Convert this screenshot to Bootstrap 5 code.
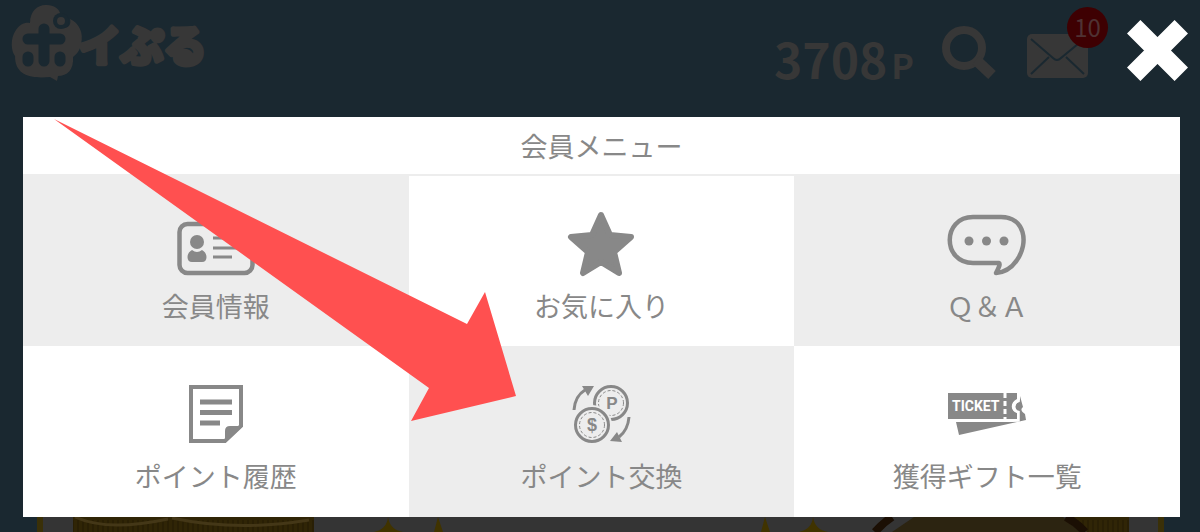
<!DOCTYPE html>
<html lang="ja">
<head>
<meta charset="utf-8">
<meta name="viewport" content="width=device-width, initial-scale=1">
<title>会員メニュー</title>
<link href="https://cdn.jsdelivr.net/npm/bootstrap@5.3.0/dist/css/bootstrap.min.css" rel="stylesheet">
<style>
:root { --night: #1a2830; --dim: #373737; --ink: #888; --tile: #ededed; }
body { background: var(--night); font-family: "Noto Sans CJK JP", sans-serif; color: var(--ink); overflow-x: hidden; }
.site-bar { height: 117px; padding: 4px 12px 0 10px; color: var(--dim); }
.site-bar svg { display: block; }
.brand text { font-weight: 700; stroke-linejoin: round; }
.header-tools { padding-top: 16px; }
.points { font-size: 48px; line-height: 48px; font-weight: 700; margin: 14px 28px 0 0; }
.points small { font-size: 34px; margin-left: 4px; }
.bar-button { background: none; border: 0; padding: 0; color: inherit; }
.search-button { margin: 5px 30px 0 0; }
.mail-button { margin: 14px 39px 0 0; }
.mail-count { top: -27px; right: -20px; width: 41px; height: 41px; background: #3e0002; color: #4f3233; font-size: 24px; line-height: 40px; }
.member-menu { margin: 0 20px 0 23px; background: #fff; z-index: 1; }
.menu-title { font-size: 27px; line-height: 57px; height: 59px; font-weight: 400; border-bottom: 2px solid var(--tile); }
.menu-tile { height: 171px; padding-top: 30px; color: var(--ink); font-size: 27px; line-height: 40px; text-decoration: none; }
.menu-tile svg { height: 80px; width: 100px; }
.first-row .menu-tile { height: 170px; }
.shaded { background: var(--tile); }
.pointer-arrow { left: 31px; top: 2px; pointer-events: none; }
.promo { margin: 0 36px 0 37px; height: 15px; background: #343434; }
.promo svg { display: block; }
</style>
</head>
<body>
<header class="site-bar d-flex justify-content-between align-items-start">
  <a class="brand" href="#" aria-label="ポイぷる">
    <svg width="202" height="80" viewBox="0 0 202 80" fill="#373737">
      <path d="M20 19C20 6 29 0 37 1C44 1 49 5 50 9C45 16 47 25 55 24C60 23 61 19 60 15C69 19 74 29 71 40C70 46 67 50 63 53C64 66 57 72 48 72L47 77L40 73C18 75 5 70 5 52C1 47 0 34 6 26C10 20 15 18 20 19Z"/>
      <circle cx="51" cy="17" r="8" fill="#1a2830"/><circle cx="51" cy="17" r="4"/>
      <path d="M18 35H50M34 25V57M18 53V57M50 53V57" fill="none" stroke="#1a2830" stroke-width="11" stroke-linecap="round"/>
      <text x="68" y="58" font-size="43" stroke="#373737" stroke-width="5">イぷる</text>
    </svg>
  </a>
  <div class="header-tools d-flex align-items-start">
    <div class="points">3708<small>P</small></div>
    <button class="bar-button search-button" type="button" aria-label="検索">
      <svg width="55" height="54" viewBox="0 0 55 54" fill="none" stroke="currentColor"><circle cx="22" cy="23" r="18" stroke-width="8"/><path d="M34 35L50 50" stroke-width="11"/></svg>
    </button>
    <button class="bar-button mail-button position-relative" type="button" aria-label="メール">
      <svg width="61" height="44" viewBox="0 0 61 44"><rect width="61" height="44" rx="5" fill="currentColor"/><path d="M4 5L26 24Q30 28 34 24L57 5M4 40L22 23M57 40L39 23" fill="none" stroke="#1a2830" stroke-width="2"/></svg>
      <span class="mail-count position-absolute rounded-circle">10</span>
    </button>
    <button class="bar-button text-white" type="button" aria-label="閉じる">
      <svg width="61" height="61" viewBox="0 0 61 61" stroke="currentColor" stroke-width="19"><path d="M6.7 6.7L54.3 54.3M54.3 6.7L6.7 54.3"/></svg>
    </button>
  </div>
</header>

<main class="member-menu position-relative">
  <h1 class="menu-title text-center m-0">会員メニュー</h1>
  <nav aria-label="会員メニュー">
    <div class="row g-0 first-row text-center">
      <a class="col-4 menu-tile shaded d-flex flex-column align-items-center" href="#">
        <svg viewBox="0 0 100 80"><rect x="13.5" y="18" width="73" height="49" rx="8" fill="none" stroke="#888" stroke-width="4.5"/><circle cx="31" cy="36" r="7" fill="#888"/><path d="M26 44C20 47 20 56 26 56H36C42 56 42 47 36 44Q31 48 26 44Z" fill="#888"/><path d="M47 32H76M47 42H76M47 51H66" stroke="#888" stroke-width="3"/></svg>
        <span>会員情報</span>
      </a>
      <a class="col-4 menu-tile d-flex flex-column align-items-center" href="#">
        <svg viewBox="0 0 100 80"><path d="M50 9L59 29L80 31L63 46L68 67L50 56L32 67L37 46L20 31L41 29Z" fill="#888" stroke="#888" stroke-width="6" stroke-linejoin="round"/></svg>
        <span>お気に入り</span>
      </a>
      <a class="col-4 menu-tile shaded d-flex flex-column align-items-center" href="#">
        <svg viewBox="0 0 100 80"><path d="M36 11H64C88 11 92 37 80 54Q72 66 59 67Q64 58 62 57H36C5 57 5 11 36 11Z" fill="none" stroke="#888" stroke-width="4.5" stroke-linejoin="round"/><g fill="#888"><circle cx="32" cy="35" r="4.5"/><circle cx="49.5" cy="35" r="4.5"/><circle cx="67" cy="35" r="4.5"/></g></svg>
        <span>Ｑ＆Ａ</span>
      </a>
    </div>
    <div class="row g-0 text-center">
      <a class="col-4 menu-tile d-flex flex-column align-items-center" href="#">
        <svg viewBox="0 0 100 80"><path d="M25 11H75V50L59 65H25Z" fill="none" stroke="#888" stroke-width="4"/><path d="M34 26H66M34 36.5H66M34 47H54" stroke="#888" stroke-width="5"/><path d="M59 67V55Q59 50 64 50H77Z" fill="#888"/></svg>
        <span>ポイント履歴</span>
      </a>
      <a class="col-4 menu-tile shaded d-flex flex-column align-items-center" href="#">
        <svg viewBox="0 0 100 80" fill="none" stroke="#888"><circle cx="60" cy="27" r="16.5" stroke-width="3"/><circle cx="60" cy="27" r="12.5" stroke-dasharray="3 2"/><circle cx="41" cy="49" r="20" fill="#ededed" stroke="none"/><circle cx="41" cy="49" r="16.5" stroke-width="3"/><circle cx="41" cy="49" r="12.5" stroke-dasharray="3 2"/><path d="M23 34Q24 20 34 14M78 41Q77 54 68 61" stroke-width="3"/><path d="M31 10L43 10L37 20ZM71 66L59 65L66 56Z" fill="#888" stroke="none"/><g fill="#888" stroke="none" font-family="Liberation Sans, sans-serif" font-weight="700" text-anchor="middle"><text x="61" y="33" font-size="17">P</text><text x="41" y="55" font-size="18">$</text></g></svg>
        <span>ポイント交換</span>
      </a>
      <a class="col-4 menu-tile d-flex flex-column align-items-center" href="#">
        <svg viewBox="0 0 100 80"><path d="M19 46L76 46L86 43L88 38L89 44L22 59ZM83 20L86 31Q82 34 88 38L89 44L77 46H81V36Q75 30 83 24Z" fill="#888"/><path d="M11 17H80V23C73 26 73 35 80 37V43H11Z" fill="#888"/><path d="M11 44.5H81.500V36C75 34 75 27 81.500 25V17" fill="none" stroke="#fff" stroke-width="2.5"/><path d="M68 17V43" stroke="#fff" stroke-width="3" stroke-dasharray="5 3"/><text x="15" y="35" font-family="Roboto, sans-serif" font-size="14" font-weight="700" fill="#fff">TICKET</text></svg>
        <span>獲得ギフト一覧</span>
      </a>
    </div>
  </nav>
  <svg class="pointer-arrow position-absolute" width="463" height="303" viewBox="0 0 463 303" aria-hidden="true"><path d="M0 0L413 205L431 173L462 277L357 302L375 269Z" fill="#ff5050"/></svg>
</main>

<div class="promo overflow-hidden">
  <svg width="100%" height="15" viewBox="0 0 1127 15" preserveAspectRatio="none" aria-hidden="true">
    <defs>
      <pattern id="ridges" width="5" height="15" patternUnits="userSpaceOnUse"><path d="M0 0H5V15H0Z" fill="#302506"/><path d="M1 3V15" stroke="#211904"/></pattern>
    </defs>
    <path d="M0 0H6V15H0ZM1121 0H1127V15H1121Z" fill="#3a3008"/>
    <path d="M36 0H277V15H36Z" fill="url(#ridges)"/>
    <path d="M38 0Q70 15 131 2M135 1Q200 15 272 3" fill="none" stroke="#443717" stroke-width="3"/>
    <path d="M351 0Q353 13 366 15H337Q350 12 351 0ZM401 0L406 15H397ZM728 0L733 15H724ZM776 0Q778 13 791 15H762Q775 12 776 0Z" fill="#403300"/>
    <path d="M1030 0H1092V15H1050Z" fill="url(#ridges)"/>
    <path d="M877 0H1026L1043 15H855Z" fill="#2c2411"/>
    <path d="M838 15Q846 6 855 0M1029 0Q1040 6 1048 15" fill="none" stroke="#1b0f04" stroke-width="8"/>
  </svg>
</div>
<script src="https://cdn.jsdelivr.net/npm/bootstrap@5.3.0/dist/js/bootstrap.bundle.min.js"></script>
</body>
</html>
